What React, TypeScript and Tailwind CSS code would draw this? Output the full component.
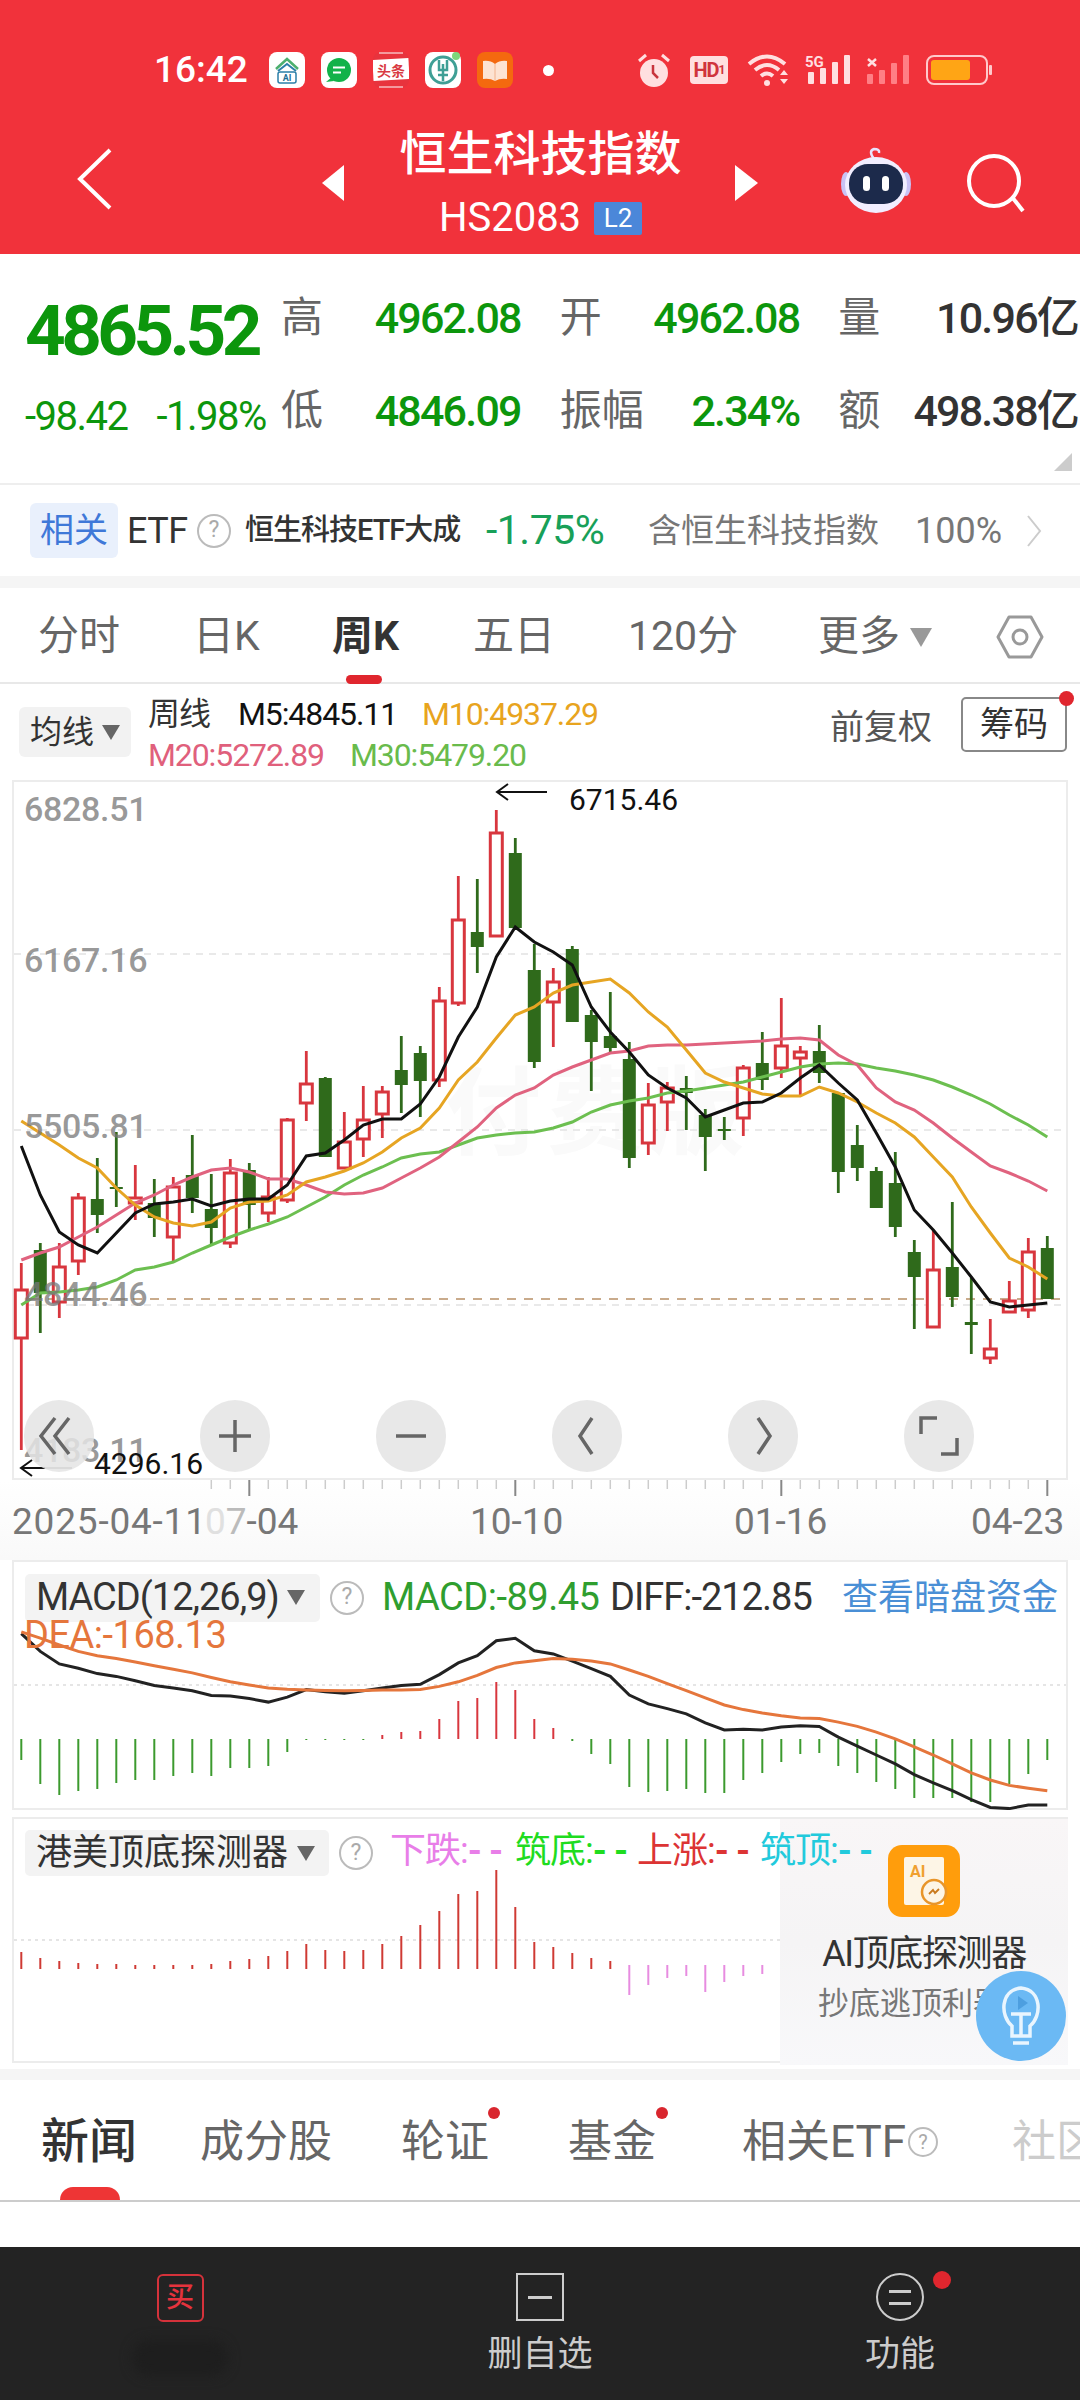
import clsx from "clsx";

type Candle = ["r" | "g", number, number, number, number];

// [colour, wick top, body top, body bottom, wick bottom], page pixels
const candles: Candle[] = [
  ["r", 1263, 1290, 1338, 1450], ["g", 1243, 1250, 1293, 1333], ["r", 1243, 1267, 1302, 1318],
  ["r", 1193, 1198, 1261, 1275], ["g", 1158, 1199, 1215, 1233], ["g", 1132, 1187, 1189, 1207],
  ["r", 1165, 1198, 1203, 1220], ["g", 1179, 1203, 1218, 1237], ["r", 1177, 1187, 1237, 1261],
  ["g", 1135, 1175, 1198, 1213], ["g", 1174, 1209, 1228, 1245], ["r", 1159, 1173, 1243, 1248],
  ["g", 1163, 1170, 1205, 1229], ["r", 1177, 1197, 1213, 1222], ["r", 1118, 1120, 1200, 1203],
  ["r", 1051, 1084, 1103, 1121], ["g", 1077, 1078, 1157, 1157], ["r", 1112, 1142, 1168, 1168],
  ["r", 1086, 1120, 1139, 1157], ["r", 1086, 1092, 1114, 1138], ["g", 1036, 1070, 1085, 1113],
  ["g", 1046, 1053, 1081, 1117], ["r", 987, 1001, 1080, 1087], ["r", 876, 920, 1003, 1006],
  ["g", 879, 932, 947, 973], ["r", 810, 833, 936, 936], ["g", 838, 853, 928, 928],
  ["g", 944, 970, 1062, 1068], ["r", 968, 982, 1002, 1047], ["g", 946, 949, 1022, 1022],
  ["g", 1010, 1015, 1042, 1091], ["g", 992, 1036, 1048, 1053], ["g", 1042, 1059, 1158, 1168],
  ["r", 1083, 1105, 1143, 1155], ["r", 1082, 1088, 1102, 1131], ["g", 1076, 1088, 1093, 1130],
  ["g", 1109, 1115, 1137, 1171], ["g", 1117, 1129, 1131, 1140], ["r", 1065, 1068, 1118, 1136],
  ["g", 1032, 1063, 1080, 1090], ["r", 998, 1046, 1068, 1078], ["r", 1046, 1052, 1058, 1095],
  ["g", 1025, 1051, 1073, 1083], ["g", 1093, 1093, 1172, 1193], ["g", 1125, 1145, 1168, 1181],
  ["g", 1167, 1171, 1208, 1208], ["g", 1152, 1183, 1227, 1237], ["g", 1240, 1252, 1277, 1329],
  ["r", 1230, 1270, 1327, 1327], ["g", 1202, 1267, 1297, 1307], ["g", 1278, 1322, 1325, 1354],
  ["r", 1319, 1349, 1358, 1364], ["r", 1281, 1301, 1312, 1312], ["r", 1238, 1252, 1310, 1318],
  ["g", 1236, 1248, 1299, 1299],
];

const m5 = [1146, 1195, 1232, 1245, 1253, 1233, 1213, 1204, 1202, 1199, 1206, 1201, 1199, 1199, 1185, 1156, 1153, 1140, 1125, 1119, 1119, 1104, 1077, 1037, 1007, 957, 927, 942, 952, 965, 1007, 1032, 1052, 1075, 1088, 1098, 1117, 1110, 1103, 1102, 1093, 1078, 1065, 1083, 1100, 1133, 1167, 1210, 1230, 1253, 1277, 1302, 1307, 1305, 1303];
const m10 = [1121, 1133, 1145, 1158, 1168, 1188, 1205, 1217, 1223, 1226, 1222, 1208, 1202, 1201, 1195, 1182, 1177, 1171, 1163, 1152, 1138, 1128, 1108, 1080, 1062, 1038, 1015, 1007, 993, 985, 982, 979, 993, 1012, 1027, 1050, 1073, 1082, 1088, 1094, 1096, 1096, 1087, 1093, 1102, 1113, 1123, 1137, 1157, 1177, 1207, 1233, 1258, 1267, 1279];
const m20 = [1260, 1253, 1247, 1237, 1227, 1215, 1203, 1195, 1185, 1177, 1170, 1168, 1172, 1179, 1179, 1185, 1192, 1194, 1193, 1188, 1178, 1168, 1157, 1142, 1127, 1108, 1095, 1088, 1075, 1067, 1060, 1053, 1051, 1046, 1045, 1045, 1044, 1043, 1042, 1041, 1039, 1038, 1040, 1055, 1065, 1088, 1102, 1110, 1123, 1138, 1152, 1166, 1173, 1181, 1191];
const m30 = [1305, 1293, 1292, 1290, 1287, 1280, 1270, 1267, 1262, 1253, 1245, 1237, 1230, 1224, 1217, 1207, 1197, 1185, 1175, 1167, 1158, 1154, 1152, 1145, 1138, 1135, 1133, 1132, 1128, 1122, 1112, 1105, 1101, 1098, 1093, 1091, 1088, 1085, 1082, 1077, 1072, 1067, 1064, 1063, 1064, 1068, 1071, 1075, 1080, 1087, 1095, 1104, 1115, 1125, 1137];

// MACD panel samples, 2.8 units to a pixel, measured from y=1280
const diffLine = [990, 1040, 1075, 1087, 1102, 1110, 1122, 1135, 1142, 1150, 1163, 1165, 1172, 1182, 1168, 1147, 1153, 1157, 1150, 1142, 1135, 1132, 1105, 1072, 1052, 1010, 1003, 1038, 1047, 1067, 1088, 1110, 1162, 1187, 1200, 1215, 1240, 1260, 1258, 1260, 1252, 1248, 1250, 1280, 1305, 1330, 1355, 1385, 1408, 1430, 1455, 1477, 1480, 1470, 1470];
const deaLine = [985, 1003, 1022, 1040, 1052, 1060, 1070, 1080, 1090, 1100, 1113, 1125, 1134, 1142, 1146, 1148, 1149, 1150, 1149, 1148, 1148, 1147, 1138, 1125, 1107, 1085, 1072, 1066, 1060, 1062, 1067, 1075, 1092, 1110, 1130, 1150, 1170, 1190, 1203, 1212, 1220, 1226, 1228, 1238, 1250, 1266, 1285, 1307, 1330, 1355, 1380, 1400, 1415, 1423, 1430];
// positive = red bar up, negative = green bar down, in pixels from the zero line
const macdBars = [-21, -45, -56, -52, -50, -44, -41, -41, -37, -34, -37, -29, -29, -27, -13, -1, -1, -1, -1, 4, 7, 8, 20, 38, 41, 57, 49, 20, 11, -2, -15, -25, -48, -53, -52, -50, -54, -54, -41, -34, -23, -15, -14, -27, -34, -43, -50, -59, -59, -59, -63, -63, -45, -35, -21];
const detectorBars = [17, 11, 8, 6, 5, 5, 4, 4, 4, 4, 5, 8, 10, 13, 18, 25, 19, 18, 19, 25, 33, 44, 58, 75, 78, 99, 62, 27, 22, 16, 11, 8];
const detectorDown = [26, 16, 9, 7, 23, 13, 7, 5];

const barX = (i: number) => 21.3 + 19 * i;
const macdY = (z: number) => 1280 + z / 2.8;
const points = (ys: number[]) => ys.map((y, i) => `${barX(i).toFixed(1)},${y.toFixed(1)}`).join(" ");

function HelpDot({ size = "md" }: { size?: "sm" | "md" }) {
  return (
    <span
      className={clsx(
        "flex shrink-0 items-center justify-center rounded-full border-2 border-[#bbb] text-[#aaa]",
        size === "sm" ? "h-[30px] w-[30px] text-[20px]" : "h-[34px] w-[34px] text-[23px]"
      )}
    >
      ?
    </span>
  );
}

function Caret({ color = "border-t-[#666]" }: { color?: string }) {
  return <span className={clsx("h-0 w-0 border-x-[9px] border-t-[15px] border-x-transparent", color)} />;
}

function AppTiles() {
  return (
    <div className="flex items-center gap-[16px]">
      <svg width="36" height="36" viewBox="0 0 36 36">
        <rect width="36" height="36" rx="8" fill="#fff" />
        <path d="M7 17 L18 7 L29 17" fill="none" stroke="#4caf6e" strokeWidth="2.5" />
        <path d="M9 19 L18 12 L27 19" fill="none" stroke="#2b7fa8" strokeWidth="2" />
        <rect x="9" y="20" width="18" height="11" rx="2" fill="none" stroke="#2b7fa8" strokeWidth="1.5" />
        <text x="18" y="29" fontSize="9" fontWeight="700" textAnchor="middle" fill="#1f6f96">AI</text>
      </svg>
      <svg width="36" height="36" viewBox="0 0 36 36">
        <rect width="36" height="36" rx="8" fill="#fff" />
        <circle cx="18" cy="18" r="12" fill="#12b24a" />
        <path d="M5 30 L11 25 L13 29 Z" fill="#12b24a" />
        <path d="M12 15.5 H24 M12 20.5 H20" stroke="#fff" strokeWidth="2" />
      </svg>
      <svg width="36" height="36" viewBox="0 0 36 36">
        <rect width="36" height="36" rx="8" fill="#e8333d" />
        <rect x="0" y="7" width="36" height="21" fill="#fff" transform="rotate(-3 18 18)" />
        <path d="M6 1 H30 M6 35 H30" stroke="#fff" strokeWidth="1" />
        <text x="18" y="24" fontSize="14" fontWeight="700" textAnchor="middle" fill="#d93a42">头条</text>
      </svg>
      <svg width="36" height="36" viewBox="0 0 36 36">
        <rect width="36" height="36" rx="8" fill="#fff" />
        <circle cx="18" cy="18" r="13" fill="none" stroke="#3f9f95" strokeWidth="3" />
        <path d="M14 8 V18 H22 V8 M18 12 V29 M13 23 H23" fill="none" stroke="#3f9f95" strokeWidth="2.5" />
        <circle cx="31" cy="4" r="4" fill="#7ed67a" />
      </svg>
      <svg width="36" height="36" viewBox="0 0 36 36">
        <rect width="36" height="36" rx="8" fill="#f4690f" />
        <path d="M6 9 Q13 8 18 12 Q23 8 30 9 V27 Q23 26 18 29 Q13 26 6 27 Z" fill="#fde3d2" />
        <path d="M18 12 V29" stroke="#f2b28c" strokeWidth="1" />
      </svg>
      <span className="ml-[14px] h-[11px] w-[11px] rounded-full bg-white" />
    </div>
  );
}

function StatusIcons() {
  return (
    <div className="ml-[83px] flex items-center">
      <svg width="34" height="36" viewBox="0 0 34 36">
        <circle cx="17" cy="21" r="14" fill="#ffdfe0" />
        <path d="M16 13 V21 L21 26" fill="none" stroke="#c8343c" strokeWidth="2.5" />
        <path d="M2 9 L9 3 M32 9 L25 3" stroke="#ffdfe0" strokeWidth="3" />
      </svg>
      <span className="ml-[19px] flex h-[28px] w-[38px] items-center justify-center rounded-[4px] bg-[#ffdfe0] text-[20px] leading-none font-bold tracking-[-1px] text-[#d0343c]">
        HD<span className="text-[12px]">1</span>
      </span>
      <svg className="ml-[19px]" width="44" height="34" viewBox="0 0 44 34">
        <path d="M2 11 Q20 -4 38 11 M8 17 Q20 7 32 17 M14 23 Q20 18 26 23" fill="none" stroke="#ffdfe0" strokeWidth="4" />
        <circle cx="20" cy="30" r="3" fill="#ffdfe0" />
        <path d="M33 22 L37 17 L41 22 Z M33 26 L37 31 L41 26 Z" fill="#ffdfe0" />
      </svg>
      <svg className="ml-[14px]" width="46" height="32" viewBox="0 0 46 32">
        <rect x="3" y="18" width="6" height="12" rx="1" fill="#ffdfe0" />
        <rect x="15" y="14" width="6" height="16" rx="1" fill="#ffdfe0" />
        <rect x="27" y="8" width="6" height="22" rx="1" fill="#ffdfe0" />
        <rect x="39" y="1" width="6" height="29" rx="1" fill="#ffdfe0" />
        <text x="0" y="13" fontSize="15" fontWeight="700" fill="#ffdfe0">5G</text>
      </svg>
      <svg className="ml-[15px]" width="44" height="32" viewBox="0 0 44 32">
        <rect x="1" y="20" width="6" height="10" rx="1" fill="#ff7f85" />
        <rect x="13" y="16" width="6" height="14" rx="1" fill="#ff7f85" />
        <rect x="25" y="9" width="6" height="21" rx="1" fill="#ff7f85" />
        <rect x="37" y="1" width="6" height="29" rx="1" fill="#ff7f85" />
        <path d="M2 5 L10 12 M10 5 L2 12" stroke="#ffdfe0" strokeWidth="2.5" />
      </svg>
      <svg className="ml-[16px]" width="66" height="30" viewBox="0 0 66 30">
        <rect x="1" y="1" width="60" height="28" rx="7" fill="none" stroke="#ffc9cb" strokeWidth="2" />
        <rect x="5" y="5" width="39" height="20" rx="3" fill="#ffa515" />
        <rect x="63" y="10" width="3" height="10" rx="1" fill="#ffc9cb" />
      </svg>
    </div>
  );
}

function Robot() {
  return (
    <svg width="72" height="66" viewBox="0 0 72 66">
      <path d="M34 12 Q28 4 34 2 Q40 2 39 6" fill="none" stroke="#e8e3ff" strokeWidth="2.5" />
      <ellipse cx="6" cy="37" rx="5" ry="12" fill="#c9c2f5" />
      <ellipse cx="66" cy="37" rx="5" ry="12" fill="#c9c2f5" />
      <ellipse cx="36" cy="38" rx="31" ry="28" fill="#f1eeff" />
      <rect x="9" y="17" width="54" height="40" rx="19" fill="#1c2a4b" />
      <rect x="23" y="29" width="7" height="15" rx="3.5" fill="#fff" />
      <rect x="42" y="29" width="7" height="15" rx="3.5" fill="#fff" />
    </svg>
  );
}

function Header() {
  return (
    <header className="h-[254px] shrink-0 bg-[#f1323b] text-white">
      <div className="flex h-[104px] items-center pt-[36px] pl-[154px]">
        <span className="w-[115px] text-[37px] font-medium">16:42</span>
        <AppTiles />
        <StatusIcons />
      </div>
      <div className="flex h-[150px] items-start pt-[26px]">
        <svg className="mt-[18px] ml-[77px]" width="35" height="62" viewBox="0 0 35 62">
          <path d="M33 2 L3 31 L33 60" fill="none" stroke="#fff" strokeWidth="4" />
        </svg>
        <span className="mt-[35px] ml-[210px] h-0 w-0 border-y-[18px] border-r-[22px] border-y-transparent border-r-white" />
        <div className="ml-[57px] flex w-[279px] flex-col items-center">
          <span className="text-[47px] leading-[48px] font-medium whitespace-nowrap">恒生科技指数</span>
          <div className="mt-[18px] flex items-center gap-[13px]">
            <span className="text-[40px] leading-[44px]">HS2083</span>
            <span className="flex h-[33px] w-[48px] items-center justify-center rounded-[2px] bg-[#4b87d9] text-[26px] leading-none">L2</span>
          </div>
        </div>
        <span className="mt-[35px] ml-[55px] h-0 w-0 border-y-[18px] border-l-[23px] border-y-transparent border-l-white" />
        <div className="mt-[17px] ml-[82px]">
          <Robot />
        </div>
        <svg className="mt-[23px] ml-[54px]" width="60" height="60" viewBox="0 0 60 60">
          <circle cx="28" cy="28" r="25" fill="none" stroke="#fff" strokeWidth="4" />
          <path d="M46 44 L57 58" stroke="#fff" strokeWidth="4" />
        </svg>
      </div>
    </header>
  );
}

function StatCell({ label, value, dark }: { label: string; value: string; dark?: boolean }) {
  return (
    <div className="flex h-[42px] items-center justify-between">
      <span className="text-[42px] leading-none text-[#666]">{label}</span>
      <span className={clsx("text-[43px] leading-none font-medium tracking-[-1.8px]", dark ? "text-[#333]" : "text-[#0c960c]")}>{value}</span>
    </div>
  );
}

function Stats() {
  return (
    <section className="relative flex h-[231px] shrink-0 border-b-2 border-[#eee]">
      <div className="w-[281px] shrink-0 pt-[47px] pl-[25px]">
        <div className="text-[71px] leading-[60px] font-bold tracking-[-4.6px] text-[#0c960c]">4865.52</div>
        <div className="mt-[38px] flex gap-[29px] text-[40px] leading-[36px] tracking-[-1.5px] whitespace-nowrap text-[#0c960c]">
          <span>-98.42</span>
          <span>-1.98%</span>
        </div>
      </div>
      <div className="grid w-[797px] grid-cols-3 content-start gap-x-[39px] gap-y-[51px] pt-[43px]">
        <StatCell label="高" value="4962.08" />
        <StatCell label="开" value="4962.08" />
        <StatCell label="量" value="10.96亿" dark />
        <StatCell label="低" value="4846.09" />
        <StatCell label="振幅" value="2.34%" />
        <StatCell label="额" value="498.38亿" dark />
      </div>
      {/* corner fold */}
      <svg className="absolute top-[199px] right-[8px]" width="18" height="18" viewBox="0 0 18 18">
        <path d="M18 0 V18 H0 Z" fill="#ccc" />
      </svg>
    </section>
  );
}

function EtfRow() {
  return (
    <section className="flex h-[91px] shrink-0 items-center pl-[30px] whitespace-nowrap">
      <span className="flex h-[55px] w-[88px] items-center justify-center rounded-[6px] bg-[#e9f0fc] text-[34px] text-[#3f78d8]">相关</span>
      <span className="ml-[9px] w-[60px] text-[36px] tracking-[-0.5px] text-[#333]">ETF</span>
      <span className="ml-[10px]">
        <HelpDot />
      </span>
      <span className="ml-[14px] w-[241px] text-[29px] font-medium tracking-[-1px] text-[#333]">恒生科技ETF大成</span>
      <span className="w-[162px] text-[41px] tracking-[-0.5px] text-[#18a058]">-1.75%</span>
      <span className="w-[267px] text-[33px] text-[#777]">含恒生科技指数</span>
      <span className="w-[111px] text-[36px] text-[#777]">100%</span>
      <svg width="16" height="32" viewBox="0 0 16 32">
        <path d="M2 1 L14 16 L2 31" fill="none" stroke="#ccc" strokeWidth="2" />
      </svg>
    </section>
  );
}

const periodTabs = [
  { label: "分时", width: "w-[155px]" },
  { label: "日K", width: "w-[139px]" },
  { label: "周K", width: "w-[141px]", active: true },
  { label: "五日", width: "w-[155px]" },
  { label: "120分", width: "w-[190px]" },
];

function PeriodTabs() {
  return (
    <section className="flex h-[96px] shrink-0 items-center border-b-2 border-[#e8e8e8] pt-[4px] pl-[38px]">
      {periodTabs.map((tab) => (
        <span
          key={tab.label}
          className={clsx(
            "relative text-[41px] whitespace-nowrap",
            tab.width,
            tab.active ? "font-bold text-[#333]" : "text-[#666]"
          )}
        >
          {tab.label}
          {tab.active && <span className="absolute top-[69px] left-[14px] h-[9px] w-[36px] rounded-full bg-[#e0262e]" />}
        </span>
      ))}
      <span className="text-[41px] text-[#666]">更多</span>
      <span className="ml-[10px] h-0 w-0 border-x-[11px] border-t-[19px] border-x-transparent border-t-[#999]" />
      <svg className="ml-[64px]" width="48" height="48" viewBox="0 0 48 48">
        <path d="M13 4 H35 L46 24 L35 44 H13 L2 24 Z" fill="none" stroke="#999" strokeWidth="3" strokeLinejoin="round" />
        <circle cx="24" cy="24" r="7" fill="none" stroke="#999" strokeWidth="3" />
      </svg>
    </section>
  );
}

function IndicatorRow() {
  return (
    <section className="relative flex h-[96px] shrink-0 items-start pl-[19px]">
      <div className="mt-[23px] flex h-[50px] w-[112px] items-center justify-center gap-[8px] rounded-[6px] bg-[#f2f2f2] text-[32px] text-[#333]">
        均线
        <Caret />
      </div>
      <div className="ml-[17px] text-[32px] leading-[41px] tracking-[-1.1px]">
        <div className="mt-[10px] flex whitespace-nowrap">
          <span className="w-[90px] text-[#333]">周线</span>
          <span className="w-[184px] text-[#111]">M5:4845.11</span>
          <span className="text-[#e8a41e]">M10:4937.29</span>
        </div>
        <div className="flex whitespace-nowrap">
          <span className="w-[202px] text-[#e0607c]">M20:5272.89</span>
          <span className="text-[#69bb4c]">M30:5479.20</span>
        </div>
      </div>
      <span className="absolute top-[18px] left-[830px] text-[34px] whitespace-nowrap text-[#555]">前复权</span>
      <span className="absolute top-[13px] left-[961px] flex h-[55px] w-[106px] items-center justify-center rounded-[5px] border-2 border-[#888] text-[34px] text-[#333]">筹码</span>
      <span className="absolute top-[7px] left-[1059px] h-[15px] w-[15px] rounded-full bg-[#e0262e]" />
    </section>
  );
}

function KlineDrawing() {
  return (
    <svg className="absolute top-0 left-0" width="1080" height="700" viewBox="0 780 1080 700">
      <path d="M14 954 H1066 M14 1130 H1066 M14 1305 H1066" stroke="#e2e2e2" strokeWidth="1.5" strokeDasharray="7 6" />
      <path d="M14 1299 H1066" stroke="#c9ab8c" strokeWidth="2" strokeDasharray="9 8" />
      {candles.map(([c, wt, bt, bb, wb], i) => {
        const x = barX(i);
        const color = c === "r" ? "#d8363e" : "#2f6a1b";
        return (
          <g key={i}>
            <path d={`M${x} ${wt} V${wb}`} stroke={color} strokeWidth="2.8" />
            {c === "r" ? (
              <rect x={x - 6} y={bt} width="12" height={bb - bt} fill="#fff" stroke={color} strokeWidth="3" />
            ) : (
              <rect x={x - 6.5} y={bt} width="13" height={bb - bt} fill={color} />
            )}
          </g>
        );
      })}
      <polyline points={points(m30)} fill="none" stroke="#6cbf50" strokeWidth="3" />
      <polyline points={points(m20)} fill="none" stroke="#e0637f" strokeWidth="3" />
      <polyline points={points(m10)} fill="none" stroke="#e6a523" strokeWidth="3" />
      <polyline points={points(m5)} fill="none" stroke="#111" strokeWidth="3" />
      <path d="M497 792 H547 M508 784 L497 792 L508 800" fill="none" stroke="#111" strokeWidth="2" />
      <path d="M21 1468 H72 M32 1460 L21 1468 L32 1476" fill="none" stroke="#111" strokeWidth="2" />
      <path d="M45 1468 H72" stroke="#999" strokeWidth="2" />
    </svg>
  );
}

const axisLabels = [
  { text: "6828.51", top: "top-[9px]" },
  { text: "6167.16", top: "top-[160px]" },
  { text: "5505.81", top: "top-[326px]" },
  { text: "4844.46", top: "top-[494px]" },
  { text: "4183.11", top: "top-[650px]" },
];

const chartButtons = ["M22 8 L8 26 L22 44 M36 8 L22 26 L36 44", "M10 26 H42 M26 10 V42", "M11 26 H41", "M31 8 L19 26 L31 44", "M21 8 L33 26 L21 44", "M24 8 H8 V24 M28 44 H44 V28"];

function ChartPanel() {
  return (
    <section className="relative h-[700px] shrink-0 overflow-hidden">
      <div className="mx-[12px] h-full border-2 border-[#ececec]" />
      <span className="absolute top-[285px] left-[445px] text-[96px] leading-none font-bold tracking-[6px] whitespace-nowrap text-[#fafafa]">付费版</span>
      <KlineDrawing />
      {axisLabels.map((label) => (
        <span key={label.text} className={clsx("absolute left-[24px] text-[34px] leading-[40px] font-medium tracking-[-0.3px] text-[#777]/75", label.top)}>
          {label.text}
        </span>
      ))}
      <span className="absolute top-[4px] left-[569px] text-[30px] leading-[32px] text-[#111]">6715.46</span>
      <span className="absolute top-[668px] left-[94px] text-[30px] leading-[32px] text-[#111]">4296.16</span>
      <div className="absolute top-[620px] left-[24px] flex gap-[106px]">
        {chartButtons.map((d) => (
          <span key={d} className="flex h-[72px] w-[70px] items-center justify-center rounded-full bg-[#e4e4e4]/85">
            <svg width="52" height="52" viewBox="0 0 52 52">
              <path d={d} fill="none" stroke="#666" strokeWidth="3.5" />
            </svg>
          </span>
        ))}
      </div>
    </section>
  );
}

function DateAxis() {
  return (
    <section className="relative h-[80px] shrink-0 bg-gradient-to-b from-white to-[#f9f9f9] text-[37px] leading-none text-[#777]">
      <svg className="absolute top-0 left-0" width="1080" height="18" viewBox="0 0 1080 18">
        {Array.from({ length: 45 }, (_, n) => {
          const i = n + 10;
          const major = (i - 12) % 14 === 0;
          return <path key={i} d={`M${barX(i)} 0 V${major ? 16 : 9}`} stroke={major ? "#888" : "#ccc"} strokeWidth={major ? 2 : 1.5} />;
        })}
      </svg>
      <div className="flex pt-[23px] pl-[12px] whitespace-nowrap">
        <span className="w-[193px] tracking-[0.8px]">2025-04-11</span>
        <span className="w-[92px]">
          <span className="text-[#e0e0e0]">0</span>
          <span className="text-[#bbb]">7</span>-04
        </span>
        <span className="ml-[173px] w-[93px]">10-10</span>
        <span className="ml-[171px] w-[96px]">01-16</span>
        <span className="ml-[141px] w-[95px]">04-23</span>
      </div>
    </section>
  );
}

function MacdPanel() {
  return (
    <section className="relative mx-[12px] h-[250px] shrink-0 border-2 border-[#ececec]">
      <svg className="absolute top-[-2px] left-[-14px]" width="1080" height="250" viewBox="0 1560 1080 250">
        <path d="M14 1685 H1066" stroke="#ddd" strokeWidth="1.5" strokeDasharray="3 4" />
        {macdBars.map((h, i) => (
          <path key={i} d={`M${barX(i)} 1739 V${1739 - h}`} stroke={h > 0 ? "#d8363e" : "#3c9a2e"} strokeWidth="2" />
        ))}
        <polyline points={points(diffLine.map(macdY))} fill="none" stroke="#222" strokeWidth="3" />
        <polyline points={points(deaLine.map(macdY))} fill="none" stroke="#e5763c" strokeWidth="3" />
      </svg>
      <div className="relative flex items-center pt-[7px] pl-[11px] whitespace-nowrap">
        <div className="flex h-[48px] w-[295px] shrink-0 items-center gap-[10px] rounded-[5px] bg-[#f3f3f3] pl-[11px]">
          <span className="w-[241px] shrink-0 text-[38px] tracking-[-1px] text-[#333]">MACD(12,26,9)</span>
          <Caret />
        </div>
        <span className="ml-[10px]">
          <HelpDot />
        </span>
        <span className="ml-[18px] w-[228px] shrink-0 text-[38px] tracking-[-0.5px] text-[#2f9e2f]">MACD:-89.45</span>
        <span className="w-[232px] shrink-0 text-[38px] tracking-[-1px] text-[#333]">DIFF:-212.85</span>
        <span className="text-[36px] text-[#4a8fd6]">查看暗盘资金</span>
      </div>
      <span className="absolute top-[53px] left-[10px] text-[38px] leading-[40px] tracking-[-0.5px] text-[#e5763c]">DEA:-168.13</span>
    </section>
  );
}

const signalTexts = [
  { text: "下跌:", color: "text-[#e87ee8]", width: "w-[125px]" },
  { text: "筑底:", color: "text-[#1fdc1f]", width: "w-[122px]" },
  { text: "上涨:", color: "text-[#dc3434]", width: "w-[123px]" },
  { text: "筑顶:", color: "text-[#22cadc]", width: "w-[122px]" },
];

function AiPromo() {
  return (
    <div className="absolute top-0 right-[-2px] flex h-[246px] w-[288px] flex-col items-center bg-gradient-to-b from-[#f9f6f7] via-[#f5f4f5] to-[#f8f8fa]">
      <svg className="mt-[26px]" width="72" height="72" viewBox="0 0 72 72">
        <rect width="72" height="72" rx="14" fill="#ff9d0c" />
        <rect x="16" y="12" width="40" height="48" rx="2" fill="#fdf5e6" />
        <text x="22" y="32" fontSize="16" fontWeight="700" fill="#f0a030">AI</text>
        <circle cx="46" cy="47" r="12" fill="#fdf5e6" stroke="#e8952a" strokeWidth="2.5" />
        <path d="M41 49 L45 45 L47 48 L51 44" fill="none" stroke="#c97a1e" strokeWidth="1.8" />
      </svg>
      <span className="mt-[15px] text-[36px] leading-[44px] tracking-[-1.4px] whitespace-nowrap text-[#333]">AI顶底探测器</span>
      <span className="mt-[8px] mr-[26px] text-[31px] leading-[40px] whitespace-nowrap text-[#777]">抄底逃顶利器</span>
      <span className="absolute top-[152px] right-[2px] flex h-[90px] w-[90px] items-center justify-center rounded-full bg-[#6bb9f4]">
        <svg width="50" height="64" viewBox="0 0 50 64">
          <path d="M16 42 C4 32 4 6 25 4 C46 6 46 32 34 42 V52 H16 Z" fill="none" stroke="#e9f5fe" strokeWidth="3.5" />
          <path d="M15 30 H35 M25 30 V52 M17 59 H33" fill="none" stroke="#e9f5fe" strokeWidth="3.5" />
          <path d="M22 12 L32 19 L22 26 Z" fill="#4d9fe0" />
        </svg>
      </span>
    </div>
  );
}

function DetectorPanel() {
  return (
    <section className="relative mx-[12px] mt-[7px] h-[246px] shrink-0 border-2 border-[#ececec]">
      <svg className="absolute top-[-2px] left-[-14px]" width="1080" height="246" viewBox="0 1817 1080 246">
        <path d="M14 1940 H780" stroke="#ddd" strokeWidth="1.5" strokeDasharray="3 4" />
        {detectorBars.map((h, i) => (
          <path key={i} d={`M${barX(i)} 1969 V${1969 - h}`} stroke="#cf3a34" strokeWidth="2" />
        ))}
        {detectorDown.map((h, i) => (
          <path key={i} d={`M${barX(i + 32)} 1965 V${1969 + h}`} stroke="#e78ce0" strokeWidth="2" />
        ))}
      </svg>
      <AiPromo />
      <div className="relative flex items-center pt-[11px] pl-[11px] whitespace-nowrap">
        <div className="flex h-[46px] w-[304px] shrink-0 items-center rounded-[5px] bg-[#f3f3f3] pl-[11px]">
          <span className="w-[261px] shrink-0 text-[36px] text-[#333]">港美顶底探测器</span>
          <Caret />
        </div>
        <span className="ml-[10px]">
          <HelpDot />
        </span>
        <div className="mt-[-5px] ml-[17px] flex text-[36px] leading-[40px] tracking-[-1px]">
          {signalTexts.map((s) => (
            <span key={s.text} className={clsx("shrink-0", s.color, s.width)}>
              {s.text}
              <span className="font-bold tracking-[7px]">--</span>
            </span>
          ))}
        </div>
      </div>
    </section>
  );
}

function NewsTabs() {
  return (
    <section className="relative flex h-[122px] shrink-0 items-center overflow-hidden border-b-2 border-[#ccc] pt-[4px] pl-[41px] text-[44px] whitespace-nowrap text-[#666]">
      <span className="w-[159px] shrink-0 text-[48px] font-medium text-[#333]">新闻</span>
      <span className="w-[201px] shrink-0">成分股</span>
      <span className="relative w-[167px] shrink-0">
        轮证
        <span className="absolute top-[-2px] left-[87px] h-[12px] w-[12px] rounded-full bg-[#d9262e]" />
      </span>
      <span className="relative w-[174px] shrink-0">
        基金
        <span className="absolute top-[-2px] left-[88px] h-[12px] w-[12px] rounded-full bg-[#d9262e]" />
      </span>
      <span className="flex w-[270px] shrink-0 items-center">
        相关ETF
        <span className="ml-[2px]">
          <HelpDot size="sm" />
        </span>
      </span>
      <span className="shrink-0 text-[#ccc]">社区</span>
      <span className="absolute bottom-0 left-[60px] h-[13px] w-[60px] rounded-t-full bg-[#ee3535]" />
    </section>
  );
}

function BottomBar() {
  return (
    <footer className="grid h-[153px] shrink-0 grid-cols-3 bg-[#232323] text-[35px] text-[#ccc]">
      <div className="flex flex-col items-center pt-[27px]">
        <span className="flex h-[48px] w-[47px] items-center justify-center rounded-[6px] border-2 border-[#d5323b] text-[28px] font-medium text-[#e5333d]">买</span>
        <span className="mt-[18px] h-[36px] w-[96px] rounded-full bg-[#1e1e1e] blur-[6px]" />
      </div>
      <div className="flex flex-col items-center pt-[26px]">
        <span className="flex h-[48px] w-[48px] items-center justify-center border-2 border-[#ccc]">
          <span className="h-[3px] w-[24px] bg-[#ccc]" />
        </span>
        <span className="mt-[10px] leading-[48px]">删自选</span>
      </div>
      <div className="relative flex flex-col items-center pt-[26px]">
        <span className="flex h-[48px] w-[48px] flex-col items-center justify-center gap-[9px] rounded-full border-2 border-[#ccc]">
          <span className="h-[3px] w-[22px] bg-[#ccc]" />
          <span className="h-[3px] w-[22px] bg-[#ccc]" />
        </span>
        <span className="mt-[10px] leading-[48px]">功能</span>
        <span className="absolute top-[24px] left-[213px] h-[18px] w-[18px] rounded-full bg-[#e0262e]" />
      </div>
    </footer>
  );
}

export default function App() {
  return (
    <div className="flex h-[2400px] w-[1080px] flex-col overflow-hidden bg-white font-[Roboto,'Noto_Sans_CJK_SC',sans-serif]">
      <Header />
      <Stats />
      <EtfRow />
      <div className="h-[12px] shrink-0 bg-[#f5f5f5]" />
      <PeriodTabs />
      <IndicatorRow />
      <ChartPanel />
      <DateAxis />
      <MacdPanel />
      <DetectorPanel />
      <div className="mt-[6px] h-[11px] shrink-0 bg-[#f5f5f5]" />
      <NewsTabs />
      <div className="h-[45px] shrink-0" />
      <BottomBar />
    </div>
  );
}
